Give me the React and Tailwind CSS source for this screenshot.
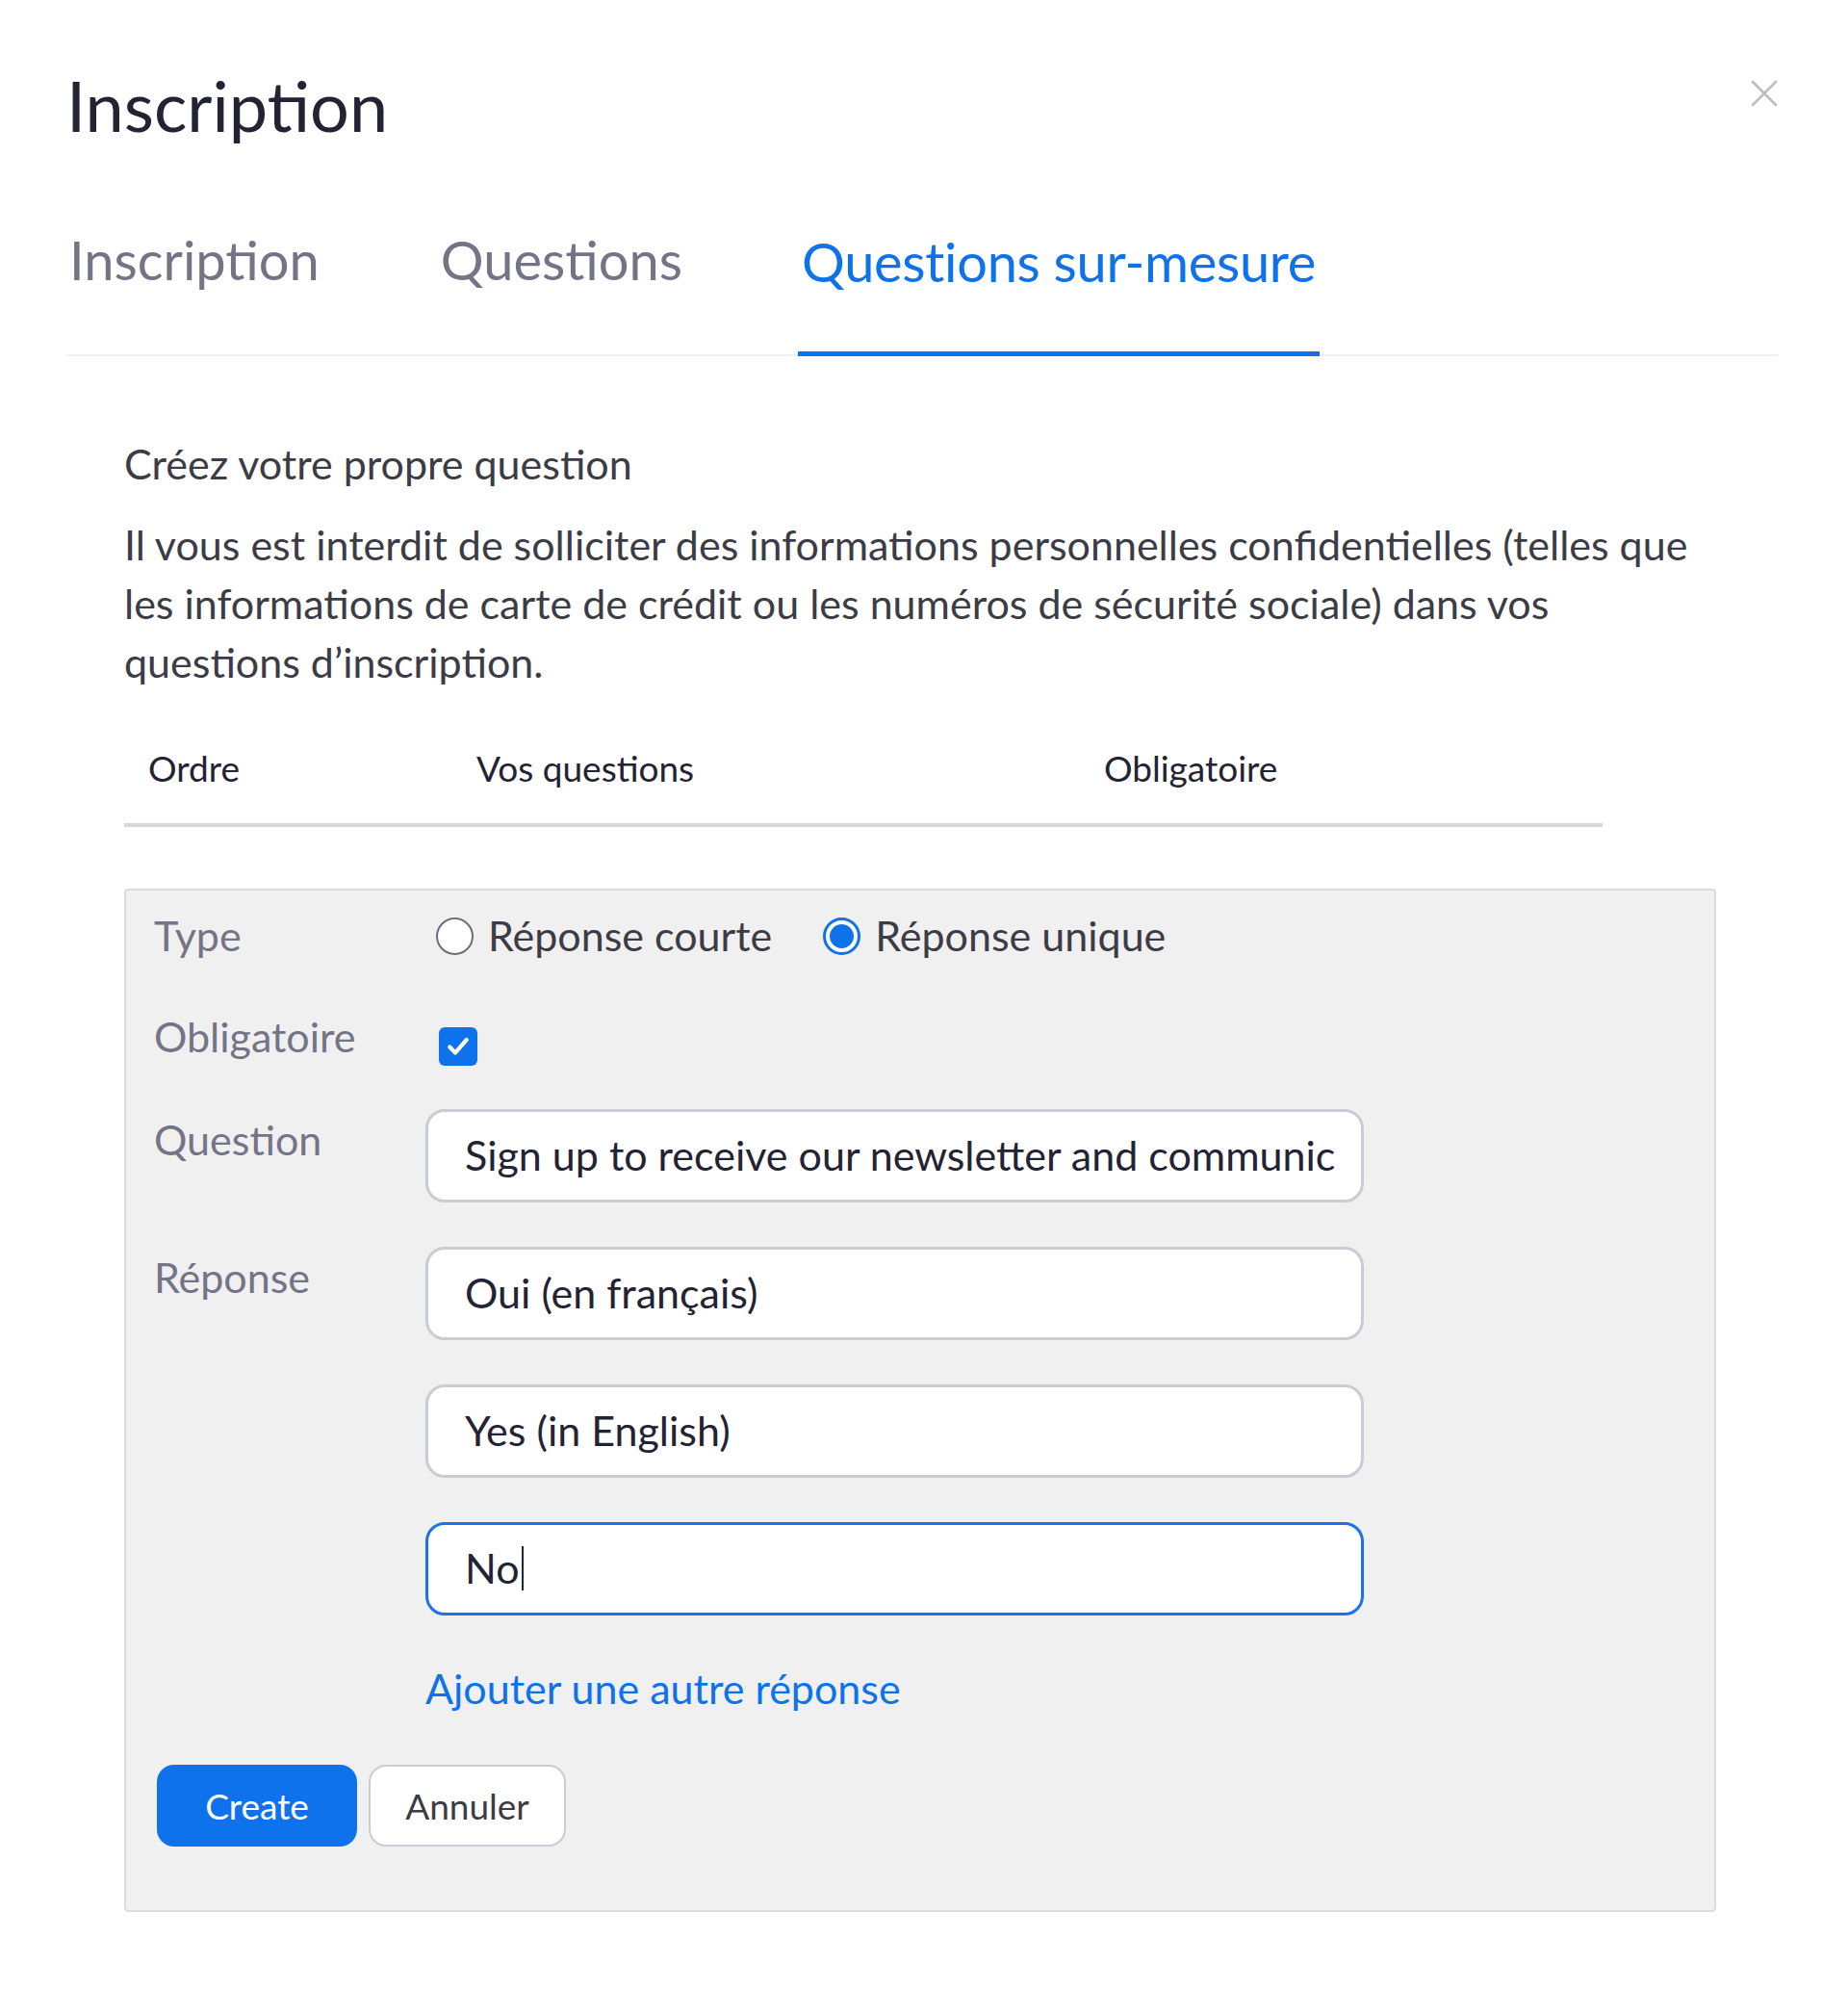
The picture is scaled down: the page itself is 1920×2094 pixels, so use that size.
import React from "react";

const answers = [
  { id: 1, value: "Oui (en français)" },
  { id: 2, value: "Yes (in English)" },
];

const Radio = ({ checked, label }) => (
  <label className="flex items-center gap-[15px]">
    {checked ? (
      <span className="w-[39px] h-[39px] rounded-full border-[3px] border-[#0e72ed] bg-white flex items-center justify-center">
        <span className="w-[25px] h-[25px] rounded-full bg-[#0e72ed]" />
      </span>
    ) : (
      <span className="w-[39px] h-[39px] rounded-full border-[2px] border-[#6e6e7a] bg-white" />
    )}
    <span className="text-[43px] text-[#3c3c46]">{label}</span>
  </label>
);

const Field = ({ value, focused, caret }) => (
  <div
    className={
      focused
        ? "w-[975px] h-[97px] rounded-[20px] border-[3px] border-[#1a73e8] bg-white flex items-center pl-[38px] pr-[12px]"
        : "w-[975px] h-[97px] rounded-[20px] border-[3px] border-[#cbcbd6] bg-white flex items-center pl-[38px] pr-[12px]"
    }
  >
    <span className="text-[43px] text-[#232333] whitespace-nowrap overflow-hidden">{value}</span>
    {caret && <span className="w-[2px] h-[46px] bg-[#232333] ml-[2px]" />}
  </div>
);

const App = () => {
  return (
    <div className="w-[1920px] min-h-[2094px] bg-white font-['Lato',sans-serif] text-[#232333]">
      <div className="pl-[69px] pr-[73px] pt-[66px]">
        {/* header */}
        <div className="flex items-start justify-between">
          <h1 className="text-[72px] leading-[1.2] text-[#232333]">Inscription</h1>
          <button className="mt-[15px] mr-[-2px] text-[#bdbdc4]">
            <svg width="32" height="32" viewBox="0 0 32 32" fill="none">
              <path d="M4 4 L28 28 M28 4 L4 28" stroke="currentColor" strokeWidth="2.6" strokeLinecap="round" />
            </svg>
          </button>
        </div>

        {/* tabs */}
        <div className="flex items-end mt-[90px] border-b-[2px] border-[#f0f0f2]">
          <div className="pb-[70px] pl-[3px] text-[56px] leading-none text-[#747487]">Inscription</div>
          <div className="ml-[126px] pb-[70px] text-[56px] leading-none text-[#747487]">Questions</div>
          <div className="ml-[120px] pb-[65px] px-[4px] text-[56px] leading-none tracking-[-0.3px] text-[#0e72ed] border-b-[5px] border-[#0e72ed] mb-[-2px]">
            Questions sur-mesure
          </div>
        </div>

        {/* body */}
        <div className="pl-[60px] pt-[80px]">
          <p className="text-[43px] text-[#3c3c46] leading-[1.5]">Créez votre propre question</p>
          <p className="mt-[20px] w-[1640px] text-[43px] text-[#3c3c46] leading-[61px]">
            Il vous est interdit de solliciter des informations personnelles confidentielles (telles que les
            informations de carte de crédit ou les numéros de sécurité sociale) dans vos questions d’inscription.
          </p>

          {/* table header */}
          <div className="mt-[52px] w-[1536px] flex items-end pb-[30px] border-b-[4px] border-[#d6d6dc] text-[37px] leading-[1.5] text-[#232333]">
            <div className="pl-[25px] w-[366px]">Ordre</div>
            <div className="w-[652px]">Vos questions</div>
            <div>Obligatoire</div>
          </div>

          {/* create form */}
          <div className="mt-[64px] w-[1654px] bg-[#f0f0f0] border-[2px] border-[#dcdcdc] rounded-[4px] pl-[29px] pt-[14px] pb-[66px]">
            <div className="flex items-center h-[66px]">
              <div className="w-[282px] text-[43px] text-[#747487]">Type</div>
              <div className="flex items-center gap-[53px] ml-[11px]">
                <Radio label="Réponse courte" />
                <Radio checked label="Réponse unique" />
              </div>
            </div>

            <div className="flex items-start mt-[40px]">
              <div className="w-[282px] text-[43px] text-[#747487]">Obligatoire</div>
              <span className="ml-[14px] mt-[22px] w-[40px] h-[40px] rounded-[6px] bg-[#0e72ed] flex items-center justify-center">
                <svg width="28" height="28" viewBox="0 0 24 24" fill="none">
                  <path d="M4.5 12.5 L9.5 17.5 L19.5 6" stroke="white" strokeWidth="3.6" strokeLinecap="round" strokeLinejoin="round" />
                </svg>
              </span>
            </div>

            <div className="flex items-start mt-[42px]">
              <div className="w-[282px] text-[43px] text-[#747487]">Question</div>
              <Field value="Sign up to receive our newsletter and communic" />
            </div>

            <div className="flex items-start mt-[46px]">
              <div className="w-[282px] text-[43px] text-[#747487]">Réponse</div>
              <div className="flex flex-col gap-[46px]">
                {answers.map(({ id, value }) => (
                  <Field key={id} value={value} />
                ))}
                <Field value="No" focused caret />
                <a className="mt-[8px] text-[43px] text-[#0e72ed] leading-none">Ajouter une autre réponse</a>
              </div>
            </div>

            <div className="flex items-center gap-[12px] mt-[58px] ml-[3px]">
              <button className="w-[208px] h-[85px] rounded-[18px] bg-[#0e72ed] text-white text-[37px]">Create</button>
              <button className="w-[205px] h-[85px] rounded-[18px] bg-white border-[2px] border-[#cbcbd6] text-[#3c3c46] text-[37px]">
                Annuler
              </button>
            </div>
          </div>
        </div>
      </div>
    </div>
  );
};

export default App;
